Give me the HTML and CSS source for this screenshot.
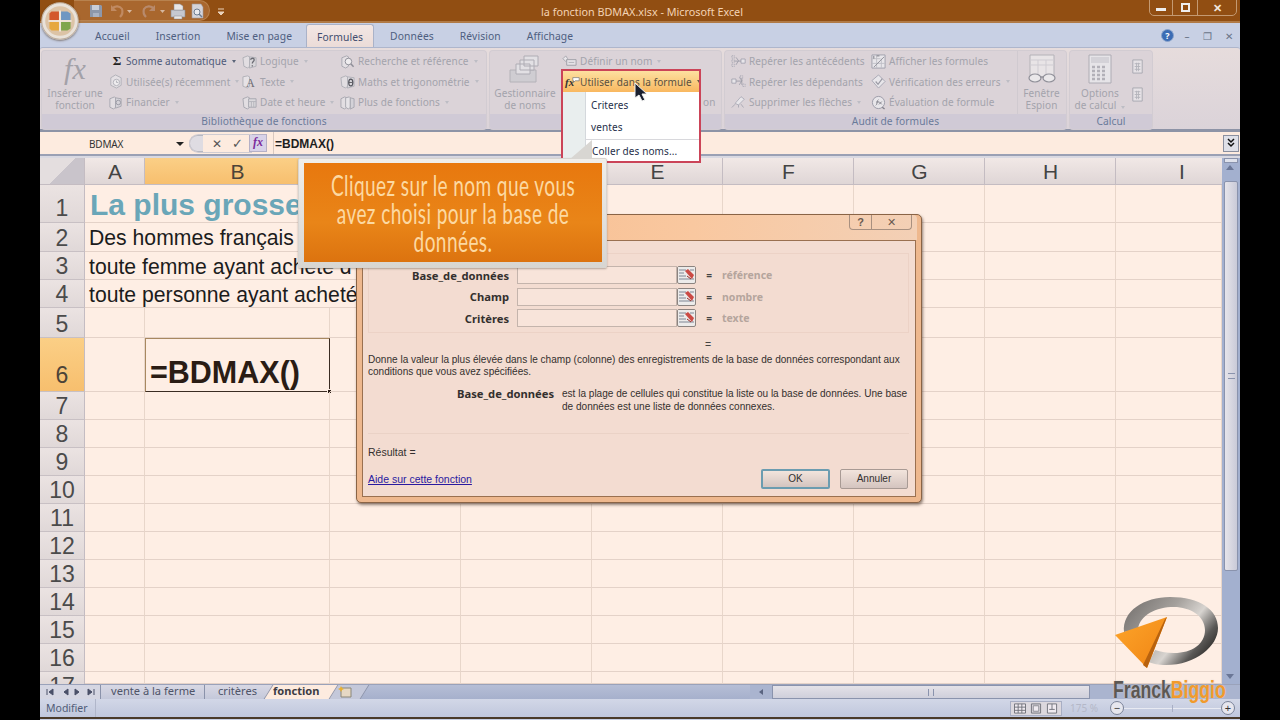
FILE: index.html
```html
<!DOCTYPE html>
<html lang="fr">
<head>
<meta charset="utf-8">
<title>la fonction BDMAX.xlsx - Microsoft Excel</title>
<link rel="stylesheet" href="styles.css">
</head>
<body>
<svg class="defs" width="0" height="0" aria-hidden="true">
  <symbol id="i-recent" viewBox="0 0 16 16"><path d="M3 4l5-3 6 3v8l-5 3-6-3z" fill="#e4e0e4" stroke="#b0b0b8"/><circle cx="9" cy="9" r="3.4" fill="#efedef" stroke="#b0b0b8"/><path d="M9 7v2h2" fill="none" stroke="#b0b0b8"/></symbol>
  <symbol id="i-fin" viewBox="0 0 16 16"><path d="M2 4l5-2 1 1v10l-2 2-4-2z" fill="#e2dee2" stroke="#a8a8b0"/><path d="M8 3l6 1v8l-6 2z" fill="#d4d2d8" stroke="#a8a8b0"/><circle cx="11" cy="8" r="2.4" fill="none" stroke="#9a9aa4"/></symbol>
  <symbol id="i-logic" viewBox="0 0 16 16"><path d="M1 4l5-2 2 1v10l-2 2-4-2z" fill="#e2dee2" stroke="#b0b0b8"/><path d="M8 3l7 1v9l-7 2z" fill="#d8d6da" stroke="#b0b0b8"/><path d="M9 6c1-2 4-2 4 0 0 2-2 2-2 4M11 12v1.4" fill="none" stroke="#6c6c74" stroke-width="1.4"/></symbol>
  <symbol id="i-date" viewBox="0 0 16 16"><path d="M1 4l5-2 2 1v10l-2 2-4-2z" fill="#e2dee2" stroke="#a8a8b0"/><path d="M7 4h8v9H7z" fill="#dad8dc" stroke="#a8a8b0"/><path d="M7 7h8M10 7v6M12.5 7v6" stroke="#b4b4bc"/></symbol>
  <symbol id="i-search" viewBox="0 0 16 16"><path d="M2 4l5-2 2 1v10l-3 2-4-2z" fill="#e4e0e4" stroke="#a8a8b0"/><circle cx="9" cy="8" r="3.5" fill="#efedef" stroke="#8e8e98"/><path d="M11.5 10.5l3 3" stroke="#8e8e98" stroke-width="1.6"/></symbol>
  <symbol id="i-math" viewBox="0 0 16 16"><path d="M1 4l5-2 2 1v10l-2 2-4-2z" fill="#e2dee2" stroke="#b0b0b8"/><path d="M8 3l7 1v9l-7 2z" fill="#dcdadf" stroke="#b0b0b8"/><ellipse cx="11.5" cy="9" rx="2.2" ry="3.6" fill="none" stroke="#55555e" stroke-width="1.3"/><path d="M9.5 9h4" stroke="#55555e"/></symbol>
  <symbol id="i-more" viewBox="0 0 16 16"><path d="M1 4l4-2 2 1v10l-2 2-4-2z" fill="#e2dee2" stroke="#a8a8b0"/><path d="M6 3l4-1 1 1v10l-2 2-3-2z" fill="#e6e4e8" stroke="#a8a8b0"/><path d="M11 3l4 1v9l-4 2z" fill="#d4d2d8" stroke="#a8a8b0"/></symbol>
  <symbol id="i-grid" viewBox="0 0 16 16"><path d="M3 1h10v14H3z" fill="#e6e2e6" stroke="#a8a8b0"/><path d="M5 5h6M5 8h6M5 11h6M7 4v9M9 4v9" stroke="#b4b4bc" fill="none"/></symbol>
  <symbol id="i-define" viewBox="0 0 16 16"><path d="M1 5l3-3 2 3-2 3z" fill="#e8e6ea" stroke="#a8a8b0"/><path d="M5 6h10v6H5z" fill="#e4e2e6" stroke="#a0a0a8"/><path d="M7 9h6" stroke="#b0b0b8"/></symbol>
  <symbol id="i-pre" viewBox="0 0 18 16"><path d="M1 1h3v3H1zM1 6h3v3H1zM1 11h3v3H1z" fill="none" stroke="#a8a8b4" stroke-dasharray="1.5 1"/><path d="M6 3l3 4-3 5M4 7.500h9" fill="none" stroke="#9a9aa6"/><path d="M12 5h5v5h-5z" fill="#e8e6ea" stroke="#a0a0ac"/></symbol>
  <symbol id="i-dep" viewBox="0 0 18 16"><path d="M1 5h5v5H1z" fill="#e8e6ea" stroke="#a0a0ac"/><path d="M11 1h3v3h-3zM14 11h3v3h-3z" fill="none" stroke="#a8a8b4" stroke-dasharray="1.500 1"/><path d="M6 7.500h7M10 3l3 4-3 5M13 4v8" fill="none" stroke="#9a9aa6"/></symbol>
  <symbol id="i-del" viewBox="0 0 18 16"><path d="M1 14l4-4M9 14v-4M15 14l-3-4" stroke="#a4a4b0" fill="none"/><path d="M5 9l7-8 4 3-7 7z" fill="#e8e6ea" stroke="#a8a8b4"/></symbol>
  <symbol id="i-show" viewBox="0 0 16 16"><path d="M1 1h14v14H1z" fill="#e8e6ea" stroke="#a0a0ac"/><path d="M1 5h9M1 10h14M6 1v14M11 5v10" stroke="#c0c0c8"/><path d="M3 14L14 3" stroke="#8e8e98"/><path d="M3 2v3M6 2h3" stroke="#777780"/></symbol>
  <symbol id="i-check" viewBox="0 0 16 16"><path d="M1 7l7-6 7 7-7 7z" fill="#e8e6ea" stroke="#a8a8b4"/><path d="M5 8l2.500 3L12 5" fill="none" stroke="#9a9aa4" stroke-width="1.300"/></symbol>
  <symbol id="i-eval" viewBox="0 0 16 16"><circle cx="8" cy="8" r="6.500" fill="#e8e6ea" stroke="#9a9aa6"/><path d="M5 11c2 0 1-6 3-6M5.500 7.500h3M8.500 7l3 3M11.500 7l-3 3" fill="none" stroke="#82828c"/><path d="M12 13l2.500 2" stroke="#82828c" stroke-width="1.400"/></symbol>
  <symbol id="i-ref" viewBox="0 0 17 15"><path d="M0 0h17v15H0z" fill="#ecebea"/><path d="M1 3h7M1 6h5M1 9h7M1 12h15M12 3h4" stroke="#7e8694" fill="none"/><path d="M7 4l3-2 6 6-2 4z" fill="#cb4a44"/><path d="M9 9l4 3" stroke="#9a2e2a"/></symbol>
</svg>
<div class="app">
  <header class="titlebar">
    <div class="office">
      <svg viewBox="0 0 36 36" width="38" height="38"><circle cx="18" cy="18" r="17.300" fill="#e9e2da" stroke="#bfae9c"/><circle cx="18" cy="18" r="14" fill="#dcc3a6"/><path d="M10 9h7v8h-9v-6z" fill="#d3582c"/><path d="M19 9h6l3 2v6h-9z" fill="#6f97c2"/><path d="M8 19h9v8h-7l-2-2z" fill="#e6a83e"/><path d="M19 19h9v6l-3 2h-6z" fill="#7fa64c"/><path d="M18 8v20M7 18h22" stroke="#f4ede4" stroke-width="1.600"/></svg>
    </div>
    <div class="qat">
      <svg viewBox="0 0 122 20" width="122" height="20"><path d="M6 4h11l1 1v11H6z" fill="#8d97aa"/><path d="M8 4h7v5H8z" fill="#c9ced8"/><path d="M9 12h6v4H9z" fill="#aab2c2"/><path d="M28 8c3-4 8-3 10 0 1 3 0 6-2 8" fill="none" stroke="#c08a62" stroke-width="2.200"/><path d="M27 4v6h6z" fill="#c08a62"/><path d="M43 9h5l-2.500 3z" fill="#d6b8a0"/><path d="M70 8c-3-4-8-3-10 0-1 3 0 6 2 8" fill="none" stroke="#b88a6c" stroke-width="2.200"/><path d="M71 4v6h-6z" fill="#b88a6c"/><path d="M76 9h5l-2.500 3z" fill="#d6b8a0"/><path d="M87 9h14v7H87z" fill="#c6c8d0" stroke="#8a8a92" stroke-width=".6"/><path d="M90 3h6l3 2v4h-9zM90 15h8v3h-8z" fill="#e8e6e6" stroke="#8a8a92" stroke-width=".5"/><path d="M108 3h9l2 3v11h-11z" fill="#d4d4da" stroke="#a0989a" stroke-width=".6"/><circle cx="113" cy="11" r="3" fill="#eaeaee" stroke="#6d7c90"/><path d="M115 13l3 3" stroke="#6d7c90" stroke-width="1.400"/></svg>
    </div>
    <span class="qat-more"><svg viewBox="0 0 8 8" width="8" height="8"><path d="M1 1h6M1 4h6L4 7z" fill="#ead2ba" stroke="#ead2ba"/></svg></span>
    <div class="title">la fonction BDMAX.xlsx - Microsoft Excel</div>
    <div class="winbtns">
      <span class="wb"><i class="min"></i></span><span class="wb"><i class="rest"></i></span><span class="wb wclose">✕</span>
    </div>
  </header>

  <nav class="tabs">
    <span class="tab">Accueil</span>
    <span class="tab">Insertion</span>
    <span class="tab">Mise en page</span>
    <span class="tab active">Formules</span>
    <span class="tab">Données</span>
    <span class="tab">Révision</span>
    <span class="tab">Affichage</span>
    <span class="tabs-right">
      <span class="help">?</span>
      <span class="mini">–</span>
      <span class="mini">❐</span>
      <span class="mini">✕</span>
    </span>
  </nav>

  <section class="ribbon">
    <div class="group g1">
      <div class="gbody">
        <div class="big bigfx"><span class="fx">fx</span><span class="biglabel">Insérer une<br>fonction</span></div>
        <div class="col c1">
          <div class="ri dark"><b class="sigma">Σ</b>Somme automatique<u></u></div>
          <div class="ri"><svg class="ic"><use href="#i-recent"/></svg>Utilisée(s) récemment<u></u></div>
          <div class="ri"><svg class="ic"><use href="#i-fin"/></svg>Financier<u></u></div>
        </div>
        <div class="col c2">
          <div class="ri"><svg class="ic"><use href="#i-logic"/></svg>Logique<u></u></div>
          <div class="ri"><svg class="ic" viewBox="0 0 16 16"><path d="M1 3l5-1 2 1v10l-2 2-5-2z" fill="#e6e2e6" stroke="#b0b0b8"/><text x="9" y="14" font-family="Liberation Serif" font-size="13" text-anchor="middle" fill="#6c6c74">A</text></svg>Texte<u></u></div>
          <div class="ri"><svg class="ic"><use href="#i-date"/></svg>Date et heure<u></u></div>
        </div>
        <div class="col c3">
          <div class="ri"><svg class="ic"><use href="#i-search"/></svg>Recherche et référence<u></u></div>
          <div class="ri"><svg class="ic"><use href="#i-math"/></svg>Maths et trigonométrie<u></u></div>
          <div class="ri"><svg class="ic"><use href="#i-more"/></svg>Plus de fonctions<u></u></div>
        </div>
      </div>
      <div class="glabel">Bibliothèque de fonctions</div>
    </div>
    <div class="group g2">
      <div class="gbody">
        <div class="big biggest">
          <svg viewBox="0 0 34 30" width="34" height="30"><path d="M2 16h26v12H2z" fill="#cfcdd2" stroke="#b4b2b8"/><path d="M8 10h14v10H8zM12 6h14v10H12zM16 2h14v10H16z" fill="#e2e0e4" stroke="#aeacb4"/></svg>
          <span class="biglabel">Gestionnaire<br>de noms</span>
        </div>
        <div class="col c4">
          <div class="ri"><svg class="ic"><use href="#i-define"/></svg>Définir un nom<u></u></div>
          <div class="ri"></div>
          <div class="ri frag">on</div>
        </div>
      </div>
      <div class="glabel"></div>
    </div>
    <div class="group g3">
      <div class="gbody">
        <div class="col c5">
          <div class="ri"><svg class="ic"><use href="#i-pre"/></svg>Repérer les antécédents</div>
          <div class="ri"><svg class="ic"><use href="#i-dep"/></svg>Repérer les dépendants</div>
          <div class="ri"><svg class="ic"><use href="#i-del"/></svg>Supprimer les flèches<u></u></div>
        </div>
        <div class="col c6">
          <div class="ri"><svg class="ic"><use href="#i-show"/></svg>Afficher les formules</div>
          <div class="ri"><svg class="ic"><use href="#i-check"/></svg>Vérification des erreurs<u></u></div>
          <div class="ri"><svg class="ic"><use href="#i-eval"/></svg>Évaluation de formule</div>
        </div>
        <div class="big bigwatch">
          <svg viewBox="0 0 30 30" width="30" height="30"><path d="M3 1h24v22H3z" fill="#e8e4e6" stroke="#b4b2b8"/><path d="M3 6h24M3 11h24M11 6v15M19 6v15" stroke="#cfccd2" fill="none"/><ellipse cx="8" cy="24" rx="6" ry="4" fill="#eae8ea" stroke="#8f8f98" stroke-width="1.200"/><ellipse cx="22" cy="24" rx="6" ry="4" fill="#eae8ea" stroke="#8f8f98" stroke-width="1.200"/><path d="M13 23h4" stroke="#8f8f98" stroke-width="1.200"/></svg>
          <span class="biglabel">Fenêtre<br>Espion</span>
        </div>
      </div>
      <div class="glabel">Audit de formules</div>
    </div>
    <div class="group g4">
      <div class="gbody">
        <div class="big bigcalc">
          <svg viewBox="0 0 24 30" width="24" height="30"><path d="M1 1h22v28H1z" fill="#e6e4e8" stroke="#aeacb4"/><path d="M3 3h18v6H3z" fill="#d4d2d8"/><path d="M4 13h3M9 13h3M14 13h3M4 17h3M9 17h3M14 17h3M4 21h3M9 21h3M14 21h3M4 25h3M9 25h3M14 25h3" stroke="#b2b0b8" stroke-width="2.400"/></svg>
          <span class="biglabel">Options<br>de calcul<u></u></span>
        </div>
        <div class="calcside">
          <svg class="ic"><use href="#i-grid"/></svg>
          <svg class="ic"><use href="#i-grid"/></svg>
        </div>
      </div>
      <div class="glabel">Calcul</div>
    </div>
  </section>

  <div class="formulabar">
    <div class="namebox"><span>BDMAX</span><i class="caret"></i></div>
    <div class="fbtns"><span class="pill"></span><span class="fx-x">✕</span><span class="fx-v">✓</span><span class="fx-f">fx</span></div>
    <div class="finput">=BDMAX()</div>
    <div class="fexpand"><svg viewBox="0 0 10 10" width="10" height="10"><path d="M2 1l3 3 3-3M2 5l3 3 3-3" fill="none" stroke="#111" stroke-width="1.500"/></svg></div>
  </div>

  <div class="sheetarea">
    <div class="grid">
      <div class="corner"></div><div class="ch">A</div><div class="ch sel">B</div><div class="ch"></div><div class="ch"></div><div class="ch">E</div><div class="ch">F</div><div class="ch">G</div><div class="ch">H</div><div class="ch lastcol">I</div>

      <div class="rh r1">1</div><div class="c wide heading">La plus grosse</div><div class="c"></div><div class="c"></div><div class="c"></div><div class="c"></div><div class="c"></div><div class="c"></div>
      <div class="rh">2</div><div class="c wide body-text">Des hommes français</div><div class="c"></div><div class="c"></div><div class="c"></div><div class="c"></div><div class="c"></div><div class="c"></div>
      <div class="rh">3</div><div class="c wide body-text">toute femme ayant acheté d</div><div class="c"></div><div class="c"></div><div class="c"></div><div class="c"></div><div class="c"></div><div class="c"></div>
      <div class="rh">4</div><div class="c wide body-text">toute personne ayant acheté</div><div class="c"></div><div class="c"></div><div class="c"></div><div class="c"></div><div class="c"></div><div class="c"></div>
      <div class="rh">5</div><div class="c"></div><div class="c"></div><div class="c"></div><div class="c"></div><div class="c"></div><div class="c"></div><div class="c"></div><div class="c"></div><div class="c"></div>
      <div class="rh sel low">6</div><div class="c"></div><div class="c active-cell">=BDMAX()<i class="handle"></i></div><div class="c"></div><div class="c"></div><div class="c"></div><div class="c"></div><div class="c"></div><div class="c"></div><div class="c"></div>
      <div class="rh">7</div><div class="c"></div><div class="c"></div><div class="c"></div><div class="c"></div><div class="c"></div><div class="c"></div><div class="c"></div><div class="c"></div><div class="c"></div>
      <div class="rh">8</div><div class="c"></div><div class="c"></div><div class="c"></div><div class="c"></div><div class="c"></div><div class="c"></div><div class="c"></div><div class="c"></div><div class="c"></div>
      <div class="rh">9</div><div class="c"></div><div class="c"></div><div class="c"></div><div class="c"></div><div class="c"></div><div class="c"></div><div class="c"></div><div class="c"></div><div class="c"></div>
      <div class="rh">10</div><div class="c"></div><div class="c"></div><div class="c"></div><div class="c"></div><div class="c"></div><div class="c"></div><div class="c"></div><div class="c"></div><div class="c"></div>
      <div class="rh">11</div><div class="c"></div><div class="c"></div><div class="c"></div><div class="c"></div><div class="c"></div><div class="c"></div><div class="c"></div><div class="c"></div><div class="c"></div>
      <div class="rh">12</div><div class="c"></div><div class="c"></div><div class="c"></div><div class="c"></div><div class="c"></div><div class="c"></div><div class="c"></div><div class="c"></div><div class="c"></div>
      <div class="rh">13</div><div class="c"></div><div class="c"></div><div class="c"></div><div class="c"></div><div class="c"></div><div class="c"></div><div class="c"></div><div class="c"></div><div class="c"></div>
      <div class="rh">14</div><div class="c"></div><div class="c"></div><div class="c"></div><div class="c"></div><div class="c"></div><div class="c"></div><div class="c"></div><div class="c"></div><div class="c"></div>
      <div class="rh">15</div><div class="c"></div><div class="c"></div><div class="c"></div><div class="c"></div><div class="c"></div><div class="c"></div><div class="c"></div><div class="c"></div><div class="c"></div>
      <div class="rh">16</div><div class="c"></div><div class="c"></div><div class="c"></div><div class="c"></div><div class="c"></div><div class="c"></div><div class="c"></div><div class="c"></div><div class="c"></div>
      <div class="rh last">17</div><div class="c"></div><div class="c"></div><div class="c"></div><div class="c"></div><div class="c"></div><div class="c"></div><div class="c"></div><div class="c"></div><div class="c"></div>
    </div>
    <div class="vscroll">
      <div class="vsplit"></div>
      <div class="varrow up"></div>
      <div class="vthumb"><i></i></div>
      <div class="vtrack"></div>
      <div class="varrow down"></div>
    </div>
  </div>

  <div class="sheettabs">
    <div class="tabnav"><svg viewBox="0 0 56 12" width="56" height="12"><path d="M5 3v6M11 3L7 6l4 3zM26 3l-4 3 4 3zM33 3l4 3-4 3zM46 3l4 3-4 3zM52 3v6" fill="#4a5068" stroke="#4a5068"/></svg></div>
    <div class="stab s1">vente à la ferme</div>
    <div class="stab s2">critères</div>
    <div class="stab current">fonction</div>
    <div class="stab newtab"><svg viewBox="0 0 18 14" width="18" height="14"><path d="M5 3h10v9H5z" fill="#e6d8c4" stroke="#8a8678"/><path d="M5 1l1 2 2 1-2 1-1 2-1-2-2-1 2-1z" fill="#e8b030"/></svg></div>
    <div class="tabfill"></div>
    <div class="hscroll"><span class="harr"><svg viewBox="0 0 8 8" width="8" height="8"><path d="M6 1L2 4l4 3z" fill="#5a6480"/></svg></span><div class="hthumb"><i></i></div><div class="htrack"></div></div>
  </div>

  <footer class="status">
    <span class="mode">Modifier</span>
    <div class="views">
      <svg class="vb" viewBox="0 0 14 12"><path d="M1 1h12v10H1zM1 4.500h12M1 8h12M5 1v10M9 1v10" fill="#efeaf0" stroke="#6e7078"/></svg>
      <svg class="vb" viewBox="0 0 14 12"><path d="M2 1h10v10H2z" fill="#d8d4da" stroke="#6e7078"/><path d="M4 3h6v6H4z" fill="#efeaf0" stroke="#8a8a92"/></svg>
      <svg class="vb" viewBox="0 0 14 12"><path d="M2 1h10v10H2z" fill="#efeaf0" stroke="#6e7078"/><path d="M7 1v6M4 7h6" stroke="#6e7078" fill="none"/></svg>
    </div>
    <span class="zoomval">175 %</span>
    <span class="zbtn">−</span><span class="slider"><i></i></span><span class="zbtn">+</span>
  </footer>
</div>

<div class="menu">
  <div class="menu-head"><span class="fxlabel">fx</span><svg class="bubble" viewBox="0 0 10 8" width="10" height="8"><path d="M1 1h8v4H4L2 7V5H1z" fill="#fff" stroke="#6a6a6a" stroke-width=".8"/></svg>Utiliser dans la formule<u></u></div>
  <div class="menu-item first">Criteres</div>
  <div class="menu-item">ventes</div>
  <div class="menu-sep"></div>
  <div class="menu-item paste">Coller des noms...</div>
</div>

<div class="dialog">
  <div class="dlg-title"><span class="dlg-btn help-b">?</span><span class="dlg-btn close-b">✕</span></div>
  <div class="dlg-body">
    <div class="argbox">
      <div class="arg"><label>Base_de_données</label><span class="inp"></span><span class="refbtn"><svg viewBox="0 0 17 15" width="17" height="15"><use href="#i-ref"/></svg></span><span class="eq">=</span><span class="val">référence</span></div>
      <div class="arg"><label>Champ</label><span class="inp"></span><span class="refbtn"><svg viewBox="0 0 17 15" width="17" height="15"><use href="#i-ref"/></svg></span><span class="eq">=</span><span class="val">nombre</span></div>
      <div class="arg"><label>Critères</label><span class="inp"></span><span class="refbtn"><svg viewBox="0 0 17 15" width="17" height="15"><use href="#i-ref"/></svg></span><span class="eq">=</span><span class="val">texte</span></div>
    </div>
    <div class="dlg-eq">=</div>
    <p class="desc">Donne la valeur la plus élevée dans le champ (colonne) des enregistrements de la base de données correspondant aux conditions que vous avez spécifiées.</p>
    <div class="argdesc"><b>Base_de_données</b><span>est la plage de cellules qui constitue la liste ou la base de données. Une base de données est une liste de données connexes.</span></div>
    <div class="dlg-rule"></div>
    <div class="result">Résultat =</div>
    <div class="dlg-foot"><a class="helplink" href="#">Aide sur cette fonction</a><span class="btn ok">OK</span><span class="btn">Annuler</span></div>
  </div>
</div>

<div class="callout">
  <div class="tail"></div>
  <div class="callout-in"><span class="callout-text">Cliquez sur le nom que vous<br>avez choisi pour la base de<br>données.</span></div>
</div>

<svg class="cursor" viewBox="0 0 14 20" width="14" height="20"><path d="M1 1v15l4-3 3 6 3-1-3-6h5z" fill="#1a2030" stroke="#f4f4f4"/></svg>

<div class="logo">
  <svg viewBox="0 0 110 80" width="110" height="80">
    <defs><linearGradient id="lg" x1="0" y1="0" x2="1" y2=".6"><stop offset="0" stop-color="#6e6a68"/><stop offset=".45" stop-color="#a4a09c"/><stop offset=".7" stop-color="#d8d4d0"/><stop offset=".9" stop-color="#5a5856"/><stop offset="1" stop-color="#3c3a38"/></linearGradient><linearGradient id="ot" x1="0" y1="0" x2="1" y2="1"><stop offset="0" stop-color="#fda52a"/><stop offset="1" stop-color="#f08414"/></linearGradient></defs>
    <path fill-rule="evenodd" d="M56 1c30 0 48 13 48 31S82 69 52 69c-8 0-13-1-17-3l6-12c6 2 12 3 19 3 18 0 31-9 31-23S76 11 60 11C42 11 26 19 24 33l-14 3C8 15 30 1 56 1z" fill="url(#lg)"/>
    <path d="M1 39L53 21 33 72z" fill="url(#ot)"/><path d="M53 21L33 72 29 69 51 23z" fill="#b8620e"/>
  </svg>
  <div class="logotext">Franck<span>Biggio</span></div>
</div>
</body>
</html>
```

FILE: styles.css
```css
*{box-sizing:border-box}
html,body{margin:0;padding:0;height:100%}
body{background:#000;width:1280px;height:720px;overflow:hidden;position:relative;font-family:"Noto Sans","Liberation Sans",sans-serif;color:#4a4a55}
.defs{position:absolute}
.app{width:1200px;height:720px;margin-left:40px;display:flex;flex-direction:column;background:#c7cfe3;padding-bottom:1px}

.titlebar{height:23px;flex:none;background:#914e12;border-bottom:2px solid #b07a46;display:flex;align-items:flex-start;position:relative}
.office{width:38px;height:38px;margin:2px 0 0 1px;flex:none;position:relative;z-index:3;border-radius:50%;box-shadow:0 1px 2px rgba(60,40,20,.5)}
.qat{width:136px;height:21px;border-radius:0 11px 11px 0;background:#a9672e;border:1px solid #b8824e;border-left:0;margin-left:-5px;padding:0 0 0 10px;flex:none}
.qat svg{display:block}
.qat-more{margin:6px 0 0 7px;width:16px;flex:none;line-height:8px;display:block}
.title{position:absolute;left:0;right:0;top:4px;text-align:center;color:#f4d3b4;font-size:10.8px;line-height:16px;padding-left:4px}
.winbtns{position:absolute;right:3px;top:-2px;height:18px;width:88px;display:flex;border:1px solid #c49a72;border-radius:0 0 5px 5px}
.wb{flex:1;display:flex;align-items:center;justify-content:center;color:#f2e6dc;border-right:1px solid #c49a72;font-size:11px;font-weight:700}
.wb:first-child{flex:0 0 23px}.wb:nth-child(2){flex:0 0 25px}
.wclose{border-right:0}
.min{width:10px;height:3px;background:#eee;margin-top:4px}
.rest{width:9px;height:9px;border:2px solid #eee}

.tabs{height:24px;flex:none;display:flex;align-items:flex-end;padding-left:42px;background:#c8d0e4;font-size:10.3px;color:#4e5e80;letter-spacing:.1px}
.tab{height:23px;line-height:25px;padding:0 13px;flex:none}
.active{background:linear-gradient(#f3e7e4,#ebdcd8);border:1px solid #aab2c8;border-bottom:0;border-radius:3px 3px 0 0;color:#3f4d6e;padding:0 10px;margin:0 3px 0 1px}
.tabs-right{margin-left:auto;display:flex;align-items:center;gap:9px;height:23px;padding-right:5px}
.help{width:13px;height:13px;border-radius:50%;background:#3b6cb4;border:1px solid #8aa4cc;color:#fff;font-size:9px;font-weight:700;line-height:11px;text-align:center;margin-right:-2px}
.mini{width:12px;text-align:center;color:#6a7488;font-size:10px}

.ribbon{height:85px;flex:none;background:linear-gradient(#e6dcdc,#dbd3d9);border-top:1px solid #aeb6cc;border-bottom:3px solid #8d93a6;display:flex;gap:4px;padding:3px 0 0 2px;font-size:10px;color:#a3a3ac;border-radius:3px 3px 0 0;letter-spacing:.1px}
.group{display:flex;flex-direction:column;height:78px;background:#dbd3d8;border-radius:3px;box-shadow:0 0 0 1px #d2ccd2;flex:none}
.g1{width:444px}.g2{width:231px}.g3{width:341px}.g4{width:82px}
.gbody{height:63px;display:flex;flex:none}
.glabel{height:15px;background:#d0cad6;text-align:center;line-height:15px;color:#6a7a9a;font-size:10.2px;border-radius:0 0 3px 3px}
.big{display:flex;flex-direction:column;align-items:center;text-align:center;line-height:12px;flex:none;padding-top:3px}
.biglabel{margin-top:auto;display:block;height:27px}
.bigfx{width:66px}
.fx{font-family:"Liberation Serif",serif;font-style:italic;font-size:30px;line-height:30px;color:#a3a1a8}
.biggest{width:70px}
.bigwatch{width:48px;border-left:1px solid #d0cad0}
.bigcalc{width:60px}
.col{display:flex;flex-direction:column;flex:none}
.c1{width:134px}.c2{width:98px}.c3{width:146px}.c4{padding-left:2px}.c5{width:146px;padding-left:6px}.c6{width:146px}
.ri{height:20.500px;display:flex;align-items:center;white-space:nowrap}
.frag{padding-left:141px}
.ri u,.biglabel u,.menu-head u{display:inline-block;width:0;height:0;border:2.500px solid transparent;border-top:3px solid #bdbdc4;border-bottom:0;margin-left:5px}
.ic{width:15px;height:15px;margin-right:3px;flex:none}
.dark{color:#4e5a78}
.dark u{border-top-color:#5a6478}
.sigma{color:#222;width:18px;font-size:13px;font-family:"Liberation Serif",serif;text-align:center}
.calcside{display:flex;flex-direction:column;gap:13px;padding-top:8px}

.formulabar{height:24px;flex:none;background:#fdebdf;display:flex;align-items:center;border-bottom:2px solid #9aa0b4;font-size:10px;color:#333}
.namebox{width:145px;display:flex;padding-left:49px;justify-content:space-between;align-items:center;padding-right:1px;letter-spacing:-.2px;padding-top:1px}
.caret{width:0;height:0;border:4px solid transparent;border-top:4px solid #222;border-bottom:0}
.fbtns{width:88px;height:22px;display:flex;align-items:center;padding-left:4px;gap:4px;position:relative}
.fbtns:before{content:"";position:absolute;left:4px;top:2px;width:62px;height:17px;border:1px solid #d0ccd2;border-right:0;border-radius:10px 0 0 10px}
.pill{width:14px;height:17px;border:1px solid #b8b8c0;border-right:0;border-radius:10px 0 0 10px;margin-right:2px;background:#dfdce2}
.fx-x{font-size:12px;color:#555;width:16px;text-align:center}
.fx-v{font-size:13px;color:#555;width:16px;text-align:center}
.fx-f{width:18px;height:18px;background:#d8d2e8;border:1px solid #b5b0c6;text-align:center;color:#7c2a9c;font-family:"Liberation Serif",serif;font-style:italic;font-weight:700;font-size:12px;line-height:15px}
.finput{flex:1;font-family:"Liberation Sans",sans-serif;font-size:12px;font-weight:700;color:#1e1e1e;border-left:1px solid #d8c8c0;height:22px;line-height:24px;padding-left:1px}
.fexpand{width:16px;height:17px;background:#dfe0e8;border:1px solid #8a8f9f;display:flex;align-items:center;justify-content:center;margin-right:1px}

.sheetarea{flex:none;height:528px;padding-top:2px;display:flex;background:#d9d9e2}
.grid{width:1182px;height:526px;display:grid;grid-template-columns:45px 60px 185px repeat(6,131px) 106px;grid-template-rows:27px 38px 29px 28px 28px 30px 54px repeat(10,28px) 12px;background:#feeee4;overflow:hidden;font-family:"Liberation Sans",sans-serif}
.corner{background:linear-gradient(135deg,#e4dedf 50%,#c9c4cb 50%);border-right:1px solid #c4bcc2;border-bottom:1px solid #c4bcc2}
.ch{background:linear-gradient(#f1e8e6,#dfd6d6);border-right:1px solid #c4bcc2;border-bottom:1px solid #c4bcc2;text-align:center;font-size:21px;line-height:28px;color:#444;padding-left:1px}
.lastcol{text-align:left;padding-left:63px;border-right:0}
.rh{background:linear-gradient(#ebe3e2,#e0d8d8);border-right:1px solid #c4bcc2;border-bottom:1px solid #c8c0c4;text-align:center;font-size:23px;line-height:26px;color:#4b4b4b;display:flex;align-items:flex-end;justify-content:center}
.r1{padding-bottom:1px}
.low{padding-bottom:3px}
.last{align-items:flex-start;overflow:hidden;border-bottom:0;line-height:28px}
.sel{background:linear-gradient(#fbcf86,#f7bf6e);color:#4d4438}
.c{border-right:1px solid #e8d6ca;border-bottom:1px solid #e4d2c8;white-space:nowrap;position:relative}
.wide{grid-column:span 3;padding-left:4px;color:#1c1c1c}
.heading{font-size:30px;font-weight:700;color:#6aa6b8;line-height:40px;padding-left:5px}
.body-text{font-size:21.200px;line-height:29px}
.active-cell{border:1px solid #3a2c22;border-top-color:#a88860;border-left-color:#a88860;font-size:30.500px;font-weight:700;color:#2a1c14;padding:14px 0 0 4px;line-height:38px}
.handle{position:absolute;right:-3px;bottom:-3px;width:5px;height:5px;background:#2a1c14;border:1px solid #feeee4}

.vscroll{flex:1;display:flex;flex-direction:column;background:#a3b0cf;padding:0 2px}
.vsplit{height:5px;background:#dfe2ec;border:1px solid #8a93ad;flex:none}
.varrow{height:15px;flex:none;position:relative}
.varrow:after{content:"";position:absolute;left:2px;border:4px solid transparent}
.up:after{top:2px;border-bottom:5px solid #6a7696;border-top:0}
.down:after{top:5px;border-top:5px solid #6a7696;border-bottom:0}
.vthumb{height:390px;flex:none;background:linear-gradient(90deg,#e6e4ea,#c9cad8);border:1px solid #8a93ad;border-radius:2px;display:flex;align-items:center;justify-content:center;margin-top:3px}
.vthumb i{width:7px;height:6px;border-top:1px solid #8a93ad;border-bottom:1px solid #8a93ad}
.vtrack{flex:1}

.sheettabs{height:15px;flex:none;display:flex;background:#aab4cf;font-size:11.100px;line-height:12px;color:#4e5468;border-top:1px solid #9aa2ba}
.tabnav{width:60px;flex:none;background:#d5d6e2;padding:1px 2px 0}
.tabnav svg{display:block}
.stab{flex:none;height:14px;background:linear-gradient(#d8d8e4,#c4c8da);position:relative;white-space:nowrap}
.stab:after{content:"";position:absolute;right:-4px;top:0;bottom:0;width:8px;background:inherit;border-right:1px solid #8a92aa;transform:skewX(-32deg);z-index:1}
.s1{width:105px;padding-left:10px;border-left:1px solid #8a92aa}
.s1:after{right:0;transform:none;width:1px;border-right:0;background:#8a92aa}
.s2{width:60px;padding-left:13px}
.current{width:65px;background:#fdebdf;color:#3c3c44;font-weight:700;padding-left:8px}
.newtab{width:31px;padding:0 0 0 6px;background:#c4c8da}
.newtab svg{position:relative;z-index:2;display:block}
.tabfill{flex:1;background:linear-gradient(#b6bed6,#a6b0cc)}
.hscroll{width:490px;flex:none;display:flex;background:#aab4cf}
.harr{width:22px;display:flex;align-items:center;justify-content:center}
.hthumb{width:318px;background:linear-gradient(#e4e2e8,#cfcfdb);border:1px solid #8a93ad;display:flex;align-items:center;justify-content:center;flex:none}
.hthumb i{width:6px;height:7px;border-left:1px solid #8a93ad;border-right:1px solid #8a93ad}
.htrack{flex:1}

.status{flex:1;background:linear-gradient(#d2d7e7,#c0c7dd);display:flex;align-items:center;font-size:10.500px;color:#505c78;padding-left:6px;border-bottom:2px solid #4a3a2a}
.mode{width:50px;flex:none;border-right:1px solid #b0b6ca;line-height:18px}
.views{margin-left:auto;width:52px;height:15px;display:flex;gap:2px;border:1px solid #a8aec4;background:#dcd8de;padding:1px 2px}
.vb{flex:1;min-width:0;height:11px}
.zoomval{width:48px;padding-left:8px;color:#b4b8c8;font-size:10px;flex:none}
.zbtn{width:14px;height:14px;border-radius:50%;border:1px solid #7a8298;background:#e6e6ee;text-align:center;line-height:11px;font-size:11px;color:#333;flex:none}
.slider{width:97px;height:1px;background:#e8eaf2;position:relative;flex:none}
.slider i{position:absolute;left:48px;top:-3px;width:1px;height:7px;background:#a8aec4}
.status .zbtn:last-child{margin-right:5px}

.menu{position:absolute;left:561px;top:69px;width:140px;height:94px;border:2px solid #cb4458;background:#fff;z-index:4;font-size:10px;color:#26304a;overflow:hidden;letter-spacing:.1px}
.menu:before{content:"";position:absolute;left:0;top:21px;bottom:0;width:22px;background:#e9eeee;border-right:1px solid #d4d8dc}
.menu-head{height:21px;background:linear-gradient(#fde0a0,#f9b860);display:flex;align-items:center;padding-left:2px;color:#5a5040;position:relative;white-space:nowrap}
.menu-head u{border-top-color:#6a5a44}
.fxlabel{font-family:"Liberation Serif",serif;font-style:italic;font-weight:700;font-size:11px;width:7px;color:#333}
.bubble{width:8px;flex:none;margin-top:-4px}
.menu-item{height:23px;line-height:23px;padding-left:28px;position:relative}
.first{margin-top:2px;height:22px}
.paste{padding-left:29px}
.menu-sep{height:1px;background:#d8d8dc;margin:0 0 0 22px;position:relative}

.dialog{position:absolute;left:356px;top:214px;width:566px;height:289px;background:#eeb88e;border:1px solid #8a6446;border-radius:5px;box-shadow:1px 2px 3px rgba(60,40,30,.55);z-index:5;padding:0 5px 5px;font-family:"Liberation Sans",sans-serif;font-size:10.050px;color:#33302e;display:flex;flex-direction:column}
.dlg-title{height:25px;flex:none;display:flex;justify-content:flex-end;margin:0 -1px 0 -5px;background:linear-gradient(90deg,#f7b988,#f9c8a0 60%,#f3d0b6);border-radius:4px 4px 0 0;padding-right:5px}
.dlg-btn{height:15px;border:1px solid #a89080;border-top:0;text-align:center;line-height:14px;font-size:11px;color:#6a5a50;flex:none}
.help-b{width:23px;border-radius:0 0 0 4px;font-weight:700}
.close-b{width:40px;border-left:0;border-radius:0 0 4px 0}
.dlg-body{flex:1;background:#f3dcd1;border:1px solid #9a7050;padding:0 6px 0 5px}
.argbox{margin-top:12px;height:80px;border:1px solid #ecd2c6;padding-top:12px;display:flex;flex-direction:column;gap:3px}
.arg{height:18.500px;display:flex;align-items:center;font-family:"Noto Sans",sans-serif}
.arg label{width:140px;text-align:right;font-weight:700;font-size:11.200px;color:#33302e;margin-right:8px}
.inp{width:160px;height:18px;border:1px solid #c4b4ac;background:#f8e4da}
.refbtn{width:19px;height:18px;border:1px solid #8c8480;background:#ecebea;border-radius:2px;display:block;flex:none}
.refbtn svg{display:block}
.eq{width:16px;text-align:right;color:#444;font-weight:700}
.val{margin-left:10px;font-weight:700;color:#b5a59d;font-size:10.500px}
.dlg-eq{padding-left:337px;height:12px;line-height:12px;margin-top:5px;color:#444;font-size:10.500px}
.desc{margin:4px 0 0;line-height:12.300px;width:540px;font-family:"Liberation Sans",sans-serif}
.argdesc{display:flex;margin-top:8px;line-height:13px}
.argdesc b{width:186px;text-align:right;font-family:"Noto Sans",sans-serif;font-size:11.200px;margin-right:8px;flex:none}
.argdesc span{width:346px}
.dlg-rule{height:1px;background:#ead2c6;margin-top:20px}
.result{margin-top:12px;line-height:12px;font-size:10.500px}
.dlg-foot{display:flex;align-items:center;margin-top:11px;height:20px;padding-right:1px}
.helplink{color:#2a1aa0;margin-right:auto;font-size:10.500px}
.btn{width:68px;height:20px;border:1px solid #a89a94;border-radius:2px;background:linear-gradient(#f2e4dc,#d4c4bf);text-align:center;line-height:18px;margin-left:10px}
.ok{width:69px;border:2px solid #6b9cb0;line-height:16px}

.callout{position:absolute;left:298px;top:158px;width:309px;height:110px;background:linear-gradient(#f0eeea,#d8d6d2);border:1px solid #d8d4d0;border-radius:2px;padding:4px 4px 5px 5px;z-index:6;box-shadow:0 1px 2px rgba(80,70,60,.4)}
.tail{position:absolute;right:14px;top:-19px;width:0;height:0;border-left:22px solid transparent;border-bottom:19px solid #d8d6d2}
.callout-in{height:100%;background:linear-gradient(#e8780e,#e98518 60%,#dc730f);display:flex;align-items:center;justify-content:center;overflow:hidden}
.callout-text{flex:none;width:380px;color:#fcd9a2;text-align:center;font-family:Lato,sans-serif;font-size:28px;line-height:28px;letter-spacing:.6px;transform:scaleX(.68)}

.cursor{position:absolute;left:634px;top:82px;z-index:7}
.logo{position:absolute;left:1113px;top:596px;width:116px;height:108px;z-index:3}
.logo svg{margin-left:1px;display:block}
.logotext{font-family:"Liberation Sans",sans-serif;font-weight:700;font-size:24px;line-height:24px;color:#5c5854;margin-top:2px;white-space:nowrap;text-shadow:0 0 2px #d8d0c8;transform:scaleX(.735);transform-origin:left center}
.logotext span{color:#f19a2c}
```
